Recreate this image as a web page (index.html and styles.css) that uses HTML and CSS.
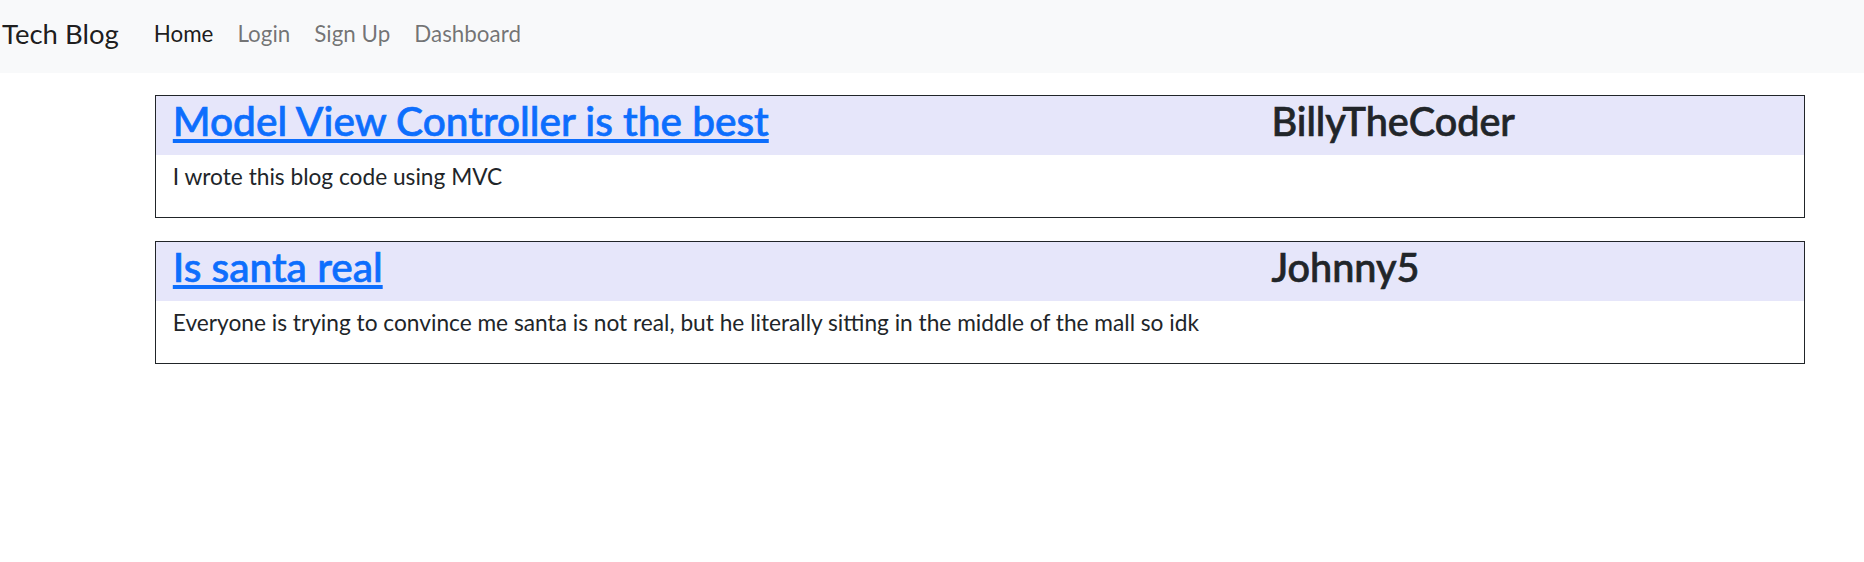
FILE: index.html
```html
<!DOCTYPE html>
<html lang="en">
<head>
<meta charset="utf-8">
<title>Tech Blog</title>
<link rel="stylesheet" href="styles.css">
</head>
<body>
<nav class="navbar">
  <a class="brand" href="#">Tech Blog</a>
  <ul class="nav">
    <li><a class="nav-link active" href="#">Home</a></li>
    <li><a class="nav-link" href="#">Login</a></li>
    <li><a class="nav-link" href="#">Sign Up</a></li>
    <li><a class="nav-link" href="#">Dashboard</a></li>
  </ul>
</nav>
<main class="posts">
  <article class="card">
    <header class="card-header">
      <div class="col-main"><h3 class="post-title"><a href="#">Model View Controller is the best</a></h3></div>
      <div class="col-side"><h3 class="post-author">BillyTheCoder</h3></div>
    </header>
    <div class="card-body">
      <p class="post-text">I wrote this blog code using MVC</p>
    </div>
  </article>
  <article class="card">
    <header class="card-header">
      <div class="col-main"><h3 class="post-title"><a href="#">Is santa real</a></h3></div>
      <div class="col-side"><h3 class="post-author">Johnny5</h3></div>
    </header>
    <div class="card-body">
      <p class="post-text">Everyone is trying to convince me santa is not real, but he literally sitting in the middle of the mall so idk</p>
    </div>
  </article>
</main>
</body>
</html>
```

FILE: styles.css
```css
* { box-sizing: border-box; }

html, body {
  margin: 0;
  padding: 0;
  background: #ffffff;
  color: #212529;
  font-family: Lato, "Open Sans", sans-serif;
}

.navbar {
  display: flex;
  align-items: center;
  height: 73px;
  padding: 0 0 6px 2px;
  background: #f8f9fa;
}

.brand {
  font-size: 27.5px;
  line-height: 34px;
  margin-top: 1px;
  margin-right: 23px;
  color: rgba(0, 0, 0, 0.9);
  text-decoration: none;
}

.nav {
  display: flex;
  list-style: none;
  margin: 0;
  padding: 0;
}

.nav-link {
  display: block;
  padding: 0 12px;
  font-size: 22.4px;
  line-height: 34px;
  color: rgba(0, 0, 0, 0.55);
  text-decoration: none;
}

.nav-link.active {
  color: rgba(0, 0, 0, 0.9);
}

.posts {
  display: flex;
  flex-direction: column;
  gap: 23px;
  margin: 22px 59px 0 155px;
}

.card {
  border: 1px solid #212529;
  background: #ffffff;
}

.card-header {
  display: flex;
  background: #e6e6fa;
  padding-top: 0.8px;
}

.col-main {
  flex: 0 0 66.6667%;
  padding: 0 16.8px;
}

.col-side {
  flex: 0 0 33.3333%;
  padding: 0 16.8px;
}

.post-title,
.post-author {
  margin: 0 0 11.2px;
  line-height: 47px;
  font-weight: 500;
  white-space: nowrap;
  -webkit-text-stroke: 0.7px currentColor;
}

.post-title {
  font-size: 40.6px;
}

.post-title a {
  color: #0d6efd;
  text-decoration: underline;
}

.post-author {
  font-size: 39.6px;
  color: #212529;
}

.card-body {
  padding: 5.4px 16.8px 0;
}

.post-text {
  margin: 0 0 23px;
  font-size: 22.7px;
  line-height: 33.6px;
}
```
